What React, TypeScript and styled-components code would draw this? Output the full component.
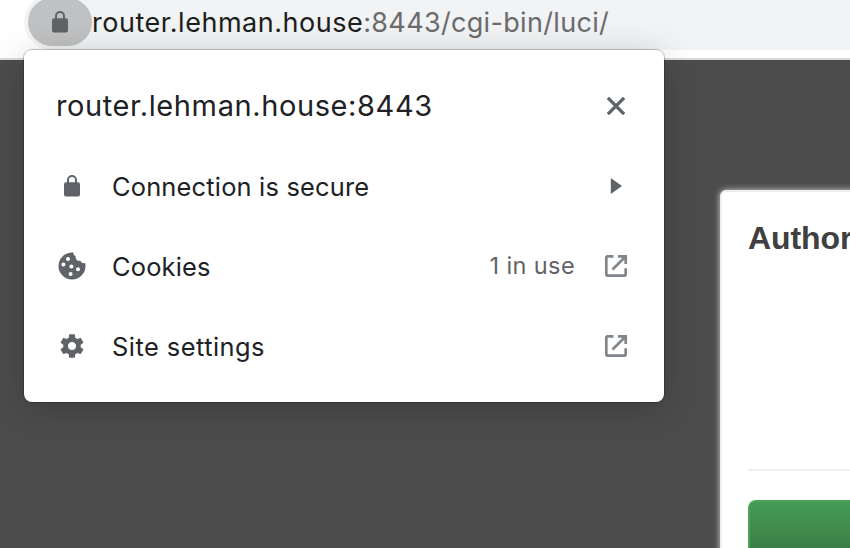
import React from "react";
import styled, { createGlobalStyle } from "styled-components";

const GlobalStyle = createGlobalStyle`
  * { box-sizing: border-box; }
  html, body { margin: 0; padding: 0; overflow: hidden; }
  body { font-family: Inter, "Liberation Sans", sans-serif; }
  svg { display: block; }
`;

const Window = styled.div`
  position: relative;
  display: flex;
  flex-direction: column;
  width: 850px;
  height: 548px;
  overflow: hidden;
  background: #4c4c4c;
`;

const Toolbar = styled.header`
  flex: none;
  height: 60px;
  padding-left: 24px;
  background: #fff;
  border-bottom: 2px solid #d9dad9;
`;

const AddressBar = styled.div`
  display: flex;
  align-items: center;
  height: 56px;
  margin-top: -6px;
  padding-left: 4px;
  border-radius: 28px 0 0 28px;
  background: #f1f3f4;
`;

const SiteInfoButton = styled.button`
  display: flex;
  align-items: center;
  justify-content: center;
  flex: none;
  width: 64px;
  height: 48px;
  padding: 0;
  border: 0;
  border-radius: 24px;
  background: #c0c1c2;
  color: #5f6368;
`;

const Url = styled.div`
  padding-top: 2px;
  font-size: 27px;
  line-height: 32px;
  white-space: pre;
  color: #6a6c6e;
`;

const Host = styled.span`
  color: #1d1e20;
  letter-spacing: 0.52px;
`;

const Path = styled.span`
  letter-spacing: 0.33px;
`;

const Page = styled.main`
  flex: 1;
  display: flex;
  padding: 130px 0 0 720px;
`;

const LoginCard = styled.section`
  flex: none;
  width: 400px;
  height: 500px;
  padding: 26px 26px;
  border: 2px solid #efeeee;
  border-radius: 6px;
  background: #fff;
  box-shadow: 0 0 6px rgba(255, 255, 255, 0.75);
`;

const LoginTitle = styled.h2`
  height: 253px;
  margin: 0;
  border-bottom: 2px solid #eee;
  font: bold 32px/40px "Liberation Sans", Arial, sans-serif;
  letter-spacing: -0.1px;
  white-space: nowrap;
  color: #404040;
`;

const LoginButton = styled.button`
  display: block;
  width: 340px;
  height: 60px;
  margin-top: 29px;
  border: 2px solid #4aa55c;
  border-radius: 8px;
  background: linear-gradient(#459a57, #397b41 54px);
`;

const Popup = styled.section`
  position: absolute;
  left: 24px;
  top: 50px;
  width: 640px;
  height: 352px;
  padding: 16px 32px;
  border-radius: 8px;
  background: #fff;
  box-shadow: 0 0 1px 1px rgba(0, 0, 0, 0.22), 0 6px 36px rgba(0, 0, 0, 0.2);
  color: #202124;
`;

const PopupHeader = styled.div`
  display: flex;
  align-items: center;
  height: 80px;
  padding-right: 4px;
`;

const PopupTitle = styled.h1`
  flex: 1;
  margin: 0;
  font-size: 29px;
  font-weight: 400;
  line-height: 40px;
  letter-spacing: 0.6px;
`;

const Row = styled.div`
  display: flex;
  align-items: center;
  height: 80px;
`;

const RowIcon = styled.span`
  display: flex;
  justify-content: center;
  width: 32px;
  margin-right: 24px;
  color: #5f6368;
`;

const RowLabel = styled.span<{ $spacing: number }>`
  flex: 1;
  padding-top: 2px;
  font-size: 25.4px;
  line-height: 32px;
  letter-spacing: ${(p) => p.$spacing}px;
`;

const RowNote = styled.span`
  margin-right: 29px;
  font-size: 23.5px;
  line-height: 32px;
  letter-spacing: 0.4px;
  color: #5f6368;
`;

const LockIcon = () => (
  <svg width="16" height="22" viewBox="0 0 16 22">
    <path d="M4 8V5a4 4 0 0 1 8 0v3" fill="none" stroke="currentColor" strokeWidth="2" />
    <rect y="7.3" width="16" height="14.2" rx="2" fill="currentColor" />
  </svg>
);

const CookieIcon = () => (
  <svg width="28" height="28" viewBox="0 0 28 28">
    <path
      d="M14 .5A13.5 13.5 0 1 0 27.5 14c0-1.2-.1-2-.4-3-2 .5-4-.3-4.8-2.200-2.900.6-5.200-1.800-4.600-4.500C16 3.600 15.200 2.200 15.500.6 15 .5 14.500.5 14 .5Z"
      fill="currentColor"
    />
    <g fill="#fff">
      <circle cx="10" cy="7" r="2" />
      <circle cx="5.4" cy="12.500" r="2" />
      <circle cx="13.400" cy="14.500" r="2" />
      <circle cx="20" cy="17.200" r="2" />
      <circle cx="12.600" cy="22" r="2" />
    </g>
  </svg>
);

const GearIcon = () => (
  <svg width="28" height="28" viewBox="0 0 24 24">
    <path
      fill="currentColor"
      d="M19.430 12.980c.040-.320.070-.640.070-.980s-.030-.660-.070-.980l2.110-1.650c.190-.150.240-.420.120-.640l-2-3.460c-.120-.220-.390-.300-.610-.220l-2.490 1c-.520-.400-1.080-.730-1.690-.980l-.380-2.650C14.460 2.180 14.250 2 14 2h-4c-.250 0-.460.180-.490.420l-.380 2.650c-.610.250-1.170.590-1.690.980l-2.490-1c-.230-.090-.490 0-.610.220l-2 3.460c-.130.220-.070.490.120.640l2.110 1.650c-.040.320-.070.650-.070.980s.030.660.070.980l-2.110 1.650c-.190.150-.240.420-.120.640l2 3.460c.120.220.390.300.610.220l2.490-1c.520.400 1.080.730 1.690.980l.380 2.650c.030.240.240.420.490.420h4c.250 0 .460-.180.490-.420l.380-2.650c.610-.250 1.170-.590 1.690-.980l2.490 1c.230.090.490 0 .610-.220l2-3.460c.120-.220.070-.490-.120-.640l-2.110-1.650zM12 15.500c-1.930 0-3.500-1.570-3.500-3.500s1.570-3.500 3.500-3.500 3.500 1.570 3.500 3.500-1.570 3.500-3.500 3.500z"
    />
  </svg>
);

const CloseIcon = () => (
  <svg width="24" height="24" viewBox="0 0 24 24">
    <path d="M3.900 3.900 20.100 20.100M20.100 3.900 3.900 20.100" stroke="#5f6368" strokeWidth="3.300" />
  </svg>
);

const ArrowIcon = () => (
  <svg width="24" height="24" viewBox="0 0 24 24">
    <path d="M6.800 4 18 12 6.800 20Z" fill="#5f6368" />
  </svg>
);

const LaunchIcon = () => (
  <svg width="24" height="24" viewBox="0 0 24 24">
    <g fill="none" stroke="#80868b" strokeWidth="2.700">
      <path d="M9.500 2.300H3.700Q2.300 2.300 2.300 3.700V20.300Q2.300 21.700 3.700 21.700H20.300Q21.700 21.700 21.700 20.300V14.300" />
      <path d="M14 2.300H21.700V10M21 3 8.500 15.500" />
    </g>
  </svg>
);

const EndIcon = styled.span`
  display: flex;
  margin-right: 4px;
`;

export default function App() {
  return (
    <>
      <GlobalStyle />
      <Window>
        <Toolbar>
          <AddressBar>
            <SiteInfoButton aria-label="View site information">
              <LockIcon />
            </SiteInfoButton>
            <Url>
              <Host>router.lehman.house</Host>
              <Path>:8443/cgi-bin/luci/</Path>
            </Url>
          </AddressBar>
        </Toolbar>
        <Page>
          <LoginCard>
            <LoginTitle>Author</LoginTitle>
            <LoginButton aria-label="Login" />
          </LoginCard>
        </Page>
        <Popup>
          <PopupHeader>
            <PopupTitle>router.lehman.house:8443</PopupTitle>
            <CloseIcon />
          </PopupHeader>
          <Row>
            <RowIcon><LockIcon /></RowIcon>
            <RowLabel $spacing={0.2}>Connection is secure</RowLabel>
            <EndIcon><ArrowIcon /></EndIcon>
          </Row>
          <Row>
            <RowIcon><CookieIcon /></RowIcon>
            <RowLabel $spacing={0.2}>Cookies</RowLabel>
            <RowNote>1 in use</RowNote>
            <EndIcon><LaunchIcon /></EndIcon>
          </Row>
          <Row>
            <RowIcon><GearIcon /></RowIcon>
            <RowLabel $spacing={0.48}>Site settings</RowLabel>
            <EndIcon><LaunchIcon /></EndIcon>
          </Row>
        </Popup>
      </Window>
    </>
  );
}
